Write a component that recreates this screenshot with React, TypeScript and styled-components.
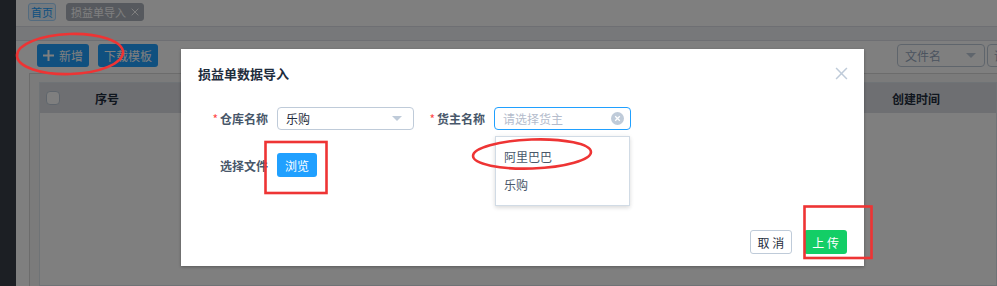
import React from 'react'
import styled, { createGlobalStyle, css } from 'styled-components'

const GlobalStyle = createGlobalStyle`
	html, body { margin: 0; padding: 0; }
	body {
		font-family: "Noto Sans CJK SC", "Noto Sans", "Liberation Sans", sans-serif;
		font-size: 12px;
		color: #1f2d3d;
	}
`

const PlusIcon = () => (
	<svg width='11' height='11' viewBox='0 0 11 11'>
		<path d='M5.5 0v11M0 5.5h11' stroke='#fff' strokeWidth='2' />
	</svg>
)

const CrossIcon = ({ size, color, width }: { size: number; color: string; width: number }) => (
	<svg width={size} height={size} viewBox='0 0 12 12'>
		<path d='M1 1l10 10M11 1L1 11' stroke={color} strokeWidth={width} />
	</svg>
)

const ClearIcon = () => (
	<svg width='13' height='13' viewBox='0 0 13 13'>
		<circle cx='6.5' cy='6.5' r='6.5' fill='#bfcbd9' />
		<path d='M4.2 4.2l4.6 4.6M8.8 4.2l-4.6 4.6' stroke='#fff' strokeWidth='1.3' />
	</svg>
)

export default function App() {
	return (
		<>
			<GlobalStyle />
			<Page>
				<Sidebar />
				<Main>
					<TabBar>
						<Tag $variant='home'>首页</Tag>
						<Tag $variant='active'>
							损益单导入 <CrossIcon size={8} color='#fff' width={1.5} />
						</Tag>
					</TabBar>
					<SubBar />
					<Content>
						<Toolbar>
							<ToolButton>
								<PlusIcon /> 新增
							</ToolButton>
							<ToolButton>下载模板</ToolButton>
							<RightTools>
								<FieldSelect>
									文件名 <Caret />
								</FieldSelect>
								<SearchInput>请输入关键字</SearchInput>
							</RightTools>
						</Toolbar>
						<Card>
							<Table>
								<HeaderRow>
									<HeadCell>
										<Checkbox />
									</HeadCell>
									<HeadCell>序号</HeadCell>
									<HeadCell />
									<HeadCell>创建时间</HeadCell>
								</HeaderRow>
							</Table>
						</Card>
					</Content>
				</Main>

				<Mask />
				<Dialog>
					<DialogHeader>
						<DialogTitle>损益单数据导入</DialogTitle>
						<CrossIcon size={13} color='#bfcbd9' width={1.4} />
					</DialogHeader>
					<DialogBody>
						<FormRow>
							<FormItem>
								<Label $required>仓库名称</Label>
								<SelectBox>
									乐购 <Caret />
								</SelectBox>
							</FormItem>
							<FormItem>
								<Label $required>货主名称</Label>
								<SelectWrap>
									<SelectBox $focused>
										<Placeholder>请选择货主</Placeholder>
										<ClearIcon />
									</SelectBox>
									<Dropdown>
										<Option>阿里巴巴</Option>
										<Option>乐购</Option>
									</Dropdown>
								</SelectWrap>
							</FormItem>
						</FormRow>
						<FormRow>
							<FormItem>
								<Label>选择文件</Label>
								<Button $kind='primary'>浏览</Button>
							</FormItem>
						</FormRow>
					</DialogBody>
					<DialogFooter>
						<Button $kind='default'>取 消</Button>
						<Button $kind='success'>上 传</Button>
					</DialogFooter>
				</Dialog>

				<Marks width='997' height='286' viewBox='0 0 997 286'>
					<ellipse cx='70' cy='54' rx='53' ry='20' transform='rotate(-2 70 54)' />
					<rect x='265.5' y='142' width='61' height='51' />
					<ellipse cx='532' cy='154' rx='59' ry='14.5' transform='rotate(-2 532 154)' />
					<rect x='804.5' y='206.5' width='67' height='51.5' />
				</Marks>
			</Page>
		</>
	)
}

const Page = styled.div`
	position: relative;
	display: flex;
	width: 997px;
	height: 286px;
	overflow: hidden;
	background: #fff;
`
const Sidebar = styled.div`
	width: 16px;
	flex-shrink: 0;
	background: #383e48;
`
const Main = styled.div`
	flex: 1;
	min-width: 0;
	display: flex;
	flex-direction: column;
	overflow: hidden;
`
const TabBar = styled.div`
	height: 27px;
	box-sizing: border-box;
	display: flex;
	align-items: flex-start;
	gap: 10px;
	padding: 3px 0 0 12px;
	border-bottom: 1px solid #dcdfe6;
`
const Tag = styled.span<{ $variant: 'home' | 'active' }>`
	display: inline-flex;
	align-items: center;
	gap: 5px;
	height: 18px;
	box-sizing: border-box;
	border-radius: 3px;
	font-size: 11px;
	${({ $variant }) =>
		$variant === 'home'
			? css`
					padding: 0 2px;
					color: #20a0ff;
					background: #e8f5ff;
					border: 1px solid #a6d6ff;
			  `
			: css`
					padding: 0 4px;
					color: #fff;
					background: #adb3bd;
					border: 1px solid #adb3bd;
			  `}
`
const SubBar = styled.div`
	height: 14px;
	box-sizing: border-box;
	background: #eef1f5;
	border-bottom: 1px solid #dcdfe6;
`
const Content = styled.div`
	flex: 1;
	display: flex;
	flex-direction: column;
	padding: 3px 0 0 13px;
`
const Toolbar = styled.div`
	display: flex;
	align-items: center;
	gap: 9px;
	height: 23px;
	padding-left: 8px;
	margin-right: -150px;
`
const ToolButton = styled.button`
	display: inline-flex;
	align-items: center;
	gap: 5px;
	height: 23px;
	padding: 0 6px;
	border: none;
	border-radius: 3px;
	background: #20a0ff;
	color: #fff;
	font: inherit;
	font-size: 12px;
`
const RightTools = styled.div`
	margin-left: auto;
	display: flex;
	gap: 2px;
`
const FieldSelect = styled.div`
	width: 88px;
	height: 23px;
	box-sizing: border-box;
	display: flex;
	align-items: center;
	justify-content: space-between;
	padding: 0 8px 0 7px;
	border: 1px solid #bfcbd9;
	border-radius: 4px;
	background: #fff;
	color: #97a8be;
`
const SearchInput = styled.div`
	width: 160px;
	height: 23px;
	box-sizing: border-box;
	padding: 0 6px;
	line-height: 21px;
	border: 1px solid #bfcbd9;
	border-radius: 4px;
	color: #97a8be;
`
const Caret = styled.span`
	width: 0;
	height: 0;
	border-left: 5px solid transparent;
	border-right: 5px solid transparent;
	border-top: 5px solid #bfcbd9;
`
const Card = styled.div`
	flex: 1;
	display: flex;
	flex-direction: column;
	margin-top: 6px;
	padding: 8px 0 0 9px;
	background: #f6f6f6;
	border-top: 1px solid #d9d9d9;
	border-left: 1px solid #d9d9d9;
`
const Table = styled.div`
	flex: 1;
	background: #fff;
	border: 1px solid #dfe6ec;
`
const HeaderRow = styled.div`
	display: grid;
	grid-template-columns: 40px 100px 1fr 119px;
	height: 30px;
	background: #dcdfe4;
`
const HeadCell = styled.div`
	display: flex;
	align-items: center;
	padding-left: 15px;
	font-weight: bold;
	color: #1f2d3d;
	&:first-child {
		padding-left: 6px;
	}
`
const Checkbox = styled.span`
	width: 14px;
	height: 14px;
	box-sizing: border-box;
	border: 1px solid #bfcbd9;
	border-radius: 4px;
	background: #fff;
`
const Mask = styled.div`
	position: absolute;
	inset: 0;
	background: rgba(0, 0, 0, 0.5);
`
const Dialog = styled.div`
	position: absolute;
	left: 181px;
	top: 49px;
	width: 683px;
	height: 217px;
	display: flex;
	flex-direction: column;
	background: #fff;
	box-shadow: 0 1px 3px rgba(0, 0, 0, 0.3);
`
const DialogHeader = styled.div`
	display: flex;
	align-items: center;
	justify-content: space-between;
	height: 16px;
	padding: 16px 16px 0 17px;
`
const DialogTitle = styled.span`
	font-size: 13px;
	font-weight: bold;
	color: #1f2d3d;
`
const DialogBody = styled.div`
	padding: 26px 0 0 19px;
`
const FormRow = styled.div`
	display: flex;
	align-items: center;
	gap: 3px;
	& + & {
		margin-top: 23px;
	}
`
const FormItem = styled.div`
	display: flex;
	align-items: center;
`
const Label = styled.label<{ $required?: boolean }>`
	width: 77px;
	box-sizing: border-box;
	padding-right: 9px;
	text-align: right;
	font-size: 12px;
	font-weight: bold;
	color: #48576a;
	${({ $required }) =>
		$required &&
		css`
			&::before {
				content: '*';
				color: #ff4949;
				margin-right: 2px;
				font-weight: normal;
			}
		`}
`
const SelectWrap = styled.div`
	position: relative;
`
const SelectBox = styled.div<{ $focused?: boolean }>`
	width: 137px;
	height: 23px;
	box-sizing: border-box;
	display: flex;
	align-items: center;
	justify-content: space-between;
	padding: 0 6px 0 8px;
	border: 1px solid ${({ $focused }) => ($focused ? '#20a0ff' : '#bfcbd9')};
	border-radius: 4px;
	color: #1f2d3d;
	font-size: 12px;
	& > ${Caret} {
		margin-right: 5px;
	}
`
const Placeholder = styled.span`
	color: #b4bccc;
`
const Dropdown = styled.div`
	position: absolute;
	top: calc(100% + 6px);
	left: 1px;
	width: 135px;
	box-sizing: border-box;
	padding: 6px 0;
	background: #fff;
	border: 1px solid #d1dbe5;
	box-shadow: 0 2px 4px rgba(0, 0, 0, 0.12), 0 0 6px rgba(0, 0, 0, 0.04);
`
const Option = styled.div`
	height: 28px;
	line-height: 28px;
	padding: 0 8px;
	color: #48576a;
	font-size: 12px;
`
const Button = styled.button<{ $kind: 'primary' | 'default' | 'success' }>`
	height: 24px;
	padding: 0 7px;
	border-radius: 3px;
	font: inherit;
	font-size: 12px;
	${({ $kind }) =>
		$kind === 'default'
			? css`
					background: #fff;
					color: #1f2d3d;
					border: 1px solid #bfcbd9;
			  `
			: css`
					color: #fff;
					border: none;
					background: ${$kind === 'primary' ? '#20a0ff' : '#13ce66'};
					padding: 0 8px;
			  `}
`
const DialogFooter = styled.div`
	margin-top: auto;
	display: flex;
	justify-content: flex-end;
	gap: 12px;
	padding: 0 17px 12px 0;
`
const Marks = styled.svg`
	position: absolute;
	left: 0;
	top: 0;
	pointer-events: none;
	fill: none;
	stroke: #ee3434;
	stroke-width: 2.6;
`
